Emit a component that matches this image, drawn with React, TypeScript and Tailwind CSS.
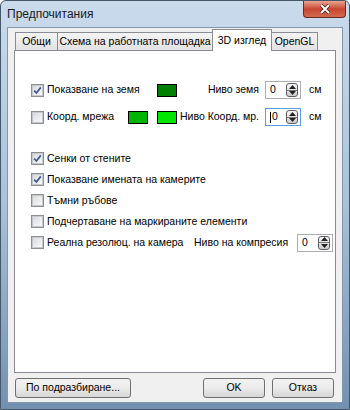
import React, { FC } from "react";

const font = "font-['Liberation_Sans',Arial,sans-serif]";

const CheckBox: FC<{ checked?: boolean }> = ({ checked }) => (
  <span className="flex h-[13px] w-[13px] shrink-0 items-center justify-center border border-[#8e8f8f] bg-white">
    <span className="flex h-[11px] w-[11px] items-center justify-center border border-[#c5c8cc] bg-gradient-to-br from-[#d9dadc] to-[#fafafa]">
      {checked && (
        <svg width="9" height="9" viewBox="0 0 9 9">
          <path d="M1.2 4.6 L3.4 7 L7.8 1.4" fill="none" stroke="#3b5795" strokeWidth="1.7" />
        </svg>
      )}
    </span>
  </span>
);

const Spin: FC<{ focused?: boolean }> = ({ focused }) => (
  <div
    className={
      "flex h-[18px] w-[36px] shrink-0 items-center bg-white pl-[4px] pr-[2px] " +
      (focused ? "border border-[#569de5]" : "border border-[#abadb3]")
    }
  >
    <span className="flex flex-1 items-center">
      {focused && <span className="mr-[1px] h-[11px] w-[1px] bg-black" />}
      0
    </span>
    <div className="flex h-[14px] w-[12px] flex-col overflow-hidden rounded-[3px] border border-[#5e5e5e] bg-gradient-to-b from-[#f7f7f7] to-[#cdcdcd]">
      <div className="flex flex-1 items-center justify-center border-b border-[#7a7a7a]">
        <svg width="7" height="4" viewBox="0 0 7 4">
          <path d="M0 4 L3.5 0 L7 4 Z" fill="#222" />
        </svg>
      </div>
      <div className="flex flex-1 items-center justify-center">
        <svg width="7" height="4" viewBox="0 0 7 4">
          <path d="M0 0 L7 0 L3.5 4 Z" fill="#222" />
        </svg>
      </div>
    </div>
  </div>
);

const Swatch: FC<{ color: string }> = ({ color }) => (
  <span className={"block h-[13px] w-[20px] shrink-0 border border-black " + color} />
);

const Button: FC<{ label: string; w: string }> = ({ label, w }) => (
  <button
    type="button"
    className={
      "flex h-[20px] shrink-0 items-center justify-center whitespace-nowrap rounded-[3px] border border-[#707070] bg-gradient-to-b from-[#f2f2f2] via-[#ebebeb] to-[#d6d6d6] text-[10.5px] text-black " +
      w
    }
  >
    {label}
  </button>
);

const Row: FC<{ checked?: boolean; label: string }> = ({ checked, label }) => (
  <div className="flex h-[21px] items-center">
    <CheckBox checked={checked} />
    <span className="ml-[3px] whitespace-nowrap">{label}</span>
  </div>
);

const tab =
  "flex h-[18px] shrink-0 items-center justify-center whitespace-nowrap border border-b-0 border-[#898c95] bg-gradient-to-b from-[#f4f4f4] to-[#e2e2e2]";

export default function App() {
  return (
    <div
      className={
        "flex h-[410px] w-[350px] flex-col overflow-hidden rounded-t-[6px] border border-[#44576b] bg-gradient-to-b from-[#cadbec] via-[#a9c1d9] to-[#7291b0] text-[10.5px] text-black " +
        font
      }
    >
      {/* Title bar */}
      <div className="flex h-[26px] shrink-0 items-start justify-between">
        <span className="ml-[6px] mt-[4px] text-[12px] text-[#1a1a1a]">Предпочитания</span>
        <div className="mr-[3px] flex h-[17px] w-[43px] items-center justify-center rounded-b-[4px] border border-t-0 border-[#6b2a22] bg-gradient-to-b from-[#e8a393] via-[#c9452f] to-[#d06a4d]">
          <svg width="12" height="10" viewBox="0 0 12 10">
            <path d="M2 1 L10 9 M10 1 L2 9" stroke="#3c1a12" strokeWidth="3.4" />
            <path d="M2 1 L10 9 M10 1 L2 9" stroke="#ffffff" strokeWidth="2" />
          </svg>
        </div>
      </div>

      {/* Client area */}
      <div className="mx-[6px] mb-[6px] flex flex-1 flex-col border border-[#8397ab] bg-[#f0f0f0] px-[6px] pt-[1px]">
        {/* Tabs */}
        <div className="flex h-[21px] items-end pl-[1px]">
          <div className={tab + " w-[43px]"}>Общи</div>
          <div className={tab + " w-[155px] border-l-0"}>Схема на работната площадка</div>
          <div className="relative z-10 -mb-[1px] -ml-[1px] flex h-[22px] w-[60px] shrink-0 items-center justify-center whitespace-nowrap border border-b-0 border-[#898c95] bg-white">
            3D изглед
          </div>
          <div className={tab + " -ml-[1px] w-[47px]"}>OpenGL</div>
        </div>

        {/* Panel */}
        <div className="flex h-[323px] flex-col border border-[#898c95] bg-white pl-[16px] pr-[2px] pt-[29px]">
          <div className="flex h-[20px] items-center">
            <div className="flex w-[126px] shrink-0 items-center">
              <CheckBox checked />
              <span className="ml-[3px] whitespace-nowrap">Показване на земя</span>
            </div>
            <Swatch color="bg-[#008000]" />
            <span className="flex-1 whitespace-nowrap pr-[6px] text-right">Ниво земя</span>
            <Spin />
            <span className="ml-[8px] w-[24px] shrink-0">см</span>
          </div>
          <div className="mt-[7px] flex h-[20px] items-center">
            <div className="flex w-[97px] shrink-0 items-center">
              <CheckBox />
              <span className="ml-[3px] whitespace-nowrap">Коорд. мрежа</span>
            </div>
            <Swatch color="bg-[#00b400]" />
            <span className="w-[9px] shrink-0" />
            <Swatch color="bg-[#00e600]" />
            <span className="flex-1 whitespace-nowrap pr-[6px] text-right">Ниво Коорд. мр.</span>
            <Spin focused />
            <span className="ml-[8px] w-[24px] shrink-0">см</span>
          </div>

          <div className="mt-[21px] flex flex-col">
            <Row checked label="Сенки от стените" />
            <Row checked label="Показване имената на камерите" />
            <Row label="Тъмни ръбове" />
            <Row label="Подчертаване на маркираните елементи" />
            <div className="flex h-[21px] items-center">
              <div className="flex w-[163px] shrink-0 items-center">
                <CheckBox />
                <span className="ml-[3px] whitespace-nowrap">Реална резолюц. на камера</span>
              </div>
              <span className="w-[103px] shrink-0 whitespace-nowrap">Ниво на компресия</span>
              <Spin />
            </div>
          </div>
        </div>

        {/* Buttons */}
        <div className="mt-[5px] flex items-center">
          <Button label="По подразбиране..." w="w-[116px] ml-[1px]" />
          <div className="flex-1" />
          <Button label="OK" w="w-[62px]" />
          <Button label="Отказ" w="w-[62px] ml-[7px] mr-[2px]" />
        </div>
      </div>
    </div>
  );
}
